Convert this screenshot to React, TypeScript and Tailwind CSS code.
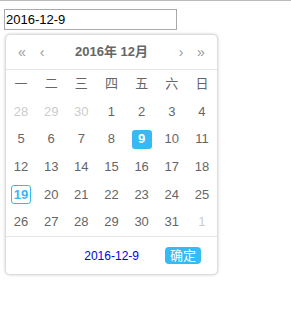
import { useState } from 'react'

const weekdays = ['一', '二', '三', '四', '五', '六', '日']

type Day = { d: number; other?: boolean }

const weeks: Day[][] = [
  [{ d: 28, other: true }, { d: 29, other: true }, { d: 30, other: true }, { d: 1 }, { d: 2 }, { d: 3 }, { d: 4 }],
  [{ d: 5 }, { d: 6 }, { d: 7 }, { d: 8 }, { d: 9 }, { d: 10 }, { d: 11 }],
  [{ d: 12 }, { d: 13 }, { d: 14 }, { d: 15 }, { d: 16 }, { d: 17 }, { d: 18 }],
  [{ d: 19 }, { d: 20 }, { d: 21 }, { d: 22 }, { d: 23 }, { d: 24 }, { d: 25 }],
  [{ d: 26 }, { d: 27 }, { d: 28 }, { d: 29 }, { d: 30 }, { d: 31 }, { d: 1, other: true }],
]

export default function App() {
  const [selected, setSelected] = useState(9)

  return (
    <div className="min-h-screen bg-white border-t border-[#bbb] font-['Liberation_Sans','Noto_Sans_CJK_SC',sans-serif]">
      <div className="pt-2 pl-1">
        <input
          readOnly
          value={`2016-12-${selected}`}
          className="block w-[173px] h-[21px] border border-[#a9a9a9] px-[1px] text-[13px] text-black outline-none"
        />
        <div className="mt-1 ml-px w-[213px] h-[241px] flex flex-col rounded-[5px] border border-[#ddd] shadow-[0_0_3px_#ccc] bg-white">
          <div className="h-[35px] flex items-center border-b border-[#e5e5e5] text-[#999] text-[14px]">
            <span className="w-[10px] ml-[11px] text-center">«</span>
            <span className="w-[10px] ml-[10px] text-center">‹</span>
            <span className="flex-1 text-center font-bold text-[#666] text-[13px]">2016年 12月</span>
            <span className="w-[10px] mr-[10px] text-center">›</span>
            <span className="w-[10px] mr-[11px] text-center">»</span>
          </div>
          <div className="grid grid-cols-7 grid-rows-6 h-[166px] text-[13px] text-[#666]">
            {weekdays.map((w) => (
              <div key={w} className="flex items-center justify-center text-[#666]">
                {w}
              </div>
            ))}
            {weeks.flat().map((day, i) => {
              const isSel = !day.other && day.d === selected
              const isToday = !day.other && day.d === 19
              return (
                <div key={i} className="flex items-center justify-center">
                  <span
                    onClick={() => !day.other && setSelected(day.d)}
                    className={`w-[20px] h-[19px] flex items-center justify-center rounded-[3px] cursor-pointer ${
                      isSel
                        ? 'bg-[#35baf3] text-white font-bold'
                        : isToday
                          ? 'border border-[#35baf3] text-[#35baf3] font-bold'
                          : day.other
                            ? 'text-[#ccc]'
                            : 'text-[#666]'
                    }`}
                  >
                    {day.d}
                  </span>
                </div>
              )
            })}
          </div>
          <div className="flex-1 flex items-center justify-end pr-4 border-t border-[#e5e5e5]">
            <span className="text-[12px] text-[#0000ee] mr-[26px]">2016-12-{selected}</span>
            <button className="w-[36px] h-[17px] rounded-[4px] bg-[#35baf3] text-white text-[13px] leading-none">
              确定
            </button>
          </div>
        </div>
      </div>
    </div>
  )
}
